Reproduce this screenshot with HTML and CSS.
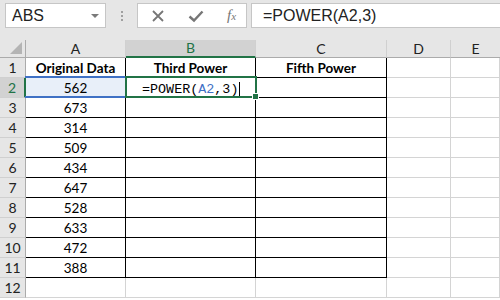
FILE: index.html
```html
<!DOCTYPE html>
<html lang="en">

<head>
    <meta charset="UTF-8">
    <title>POWER formula</title>
    <link rel="stylesheet" href="styles.css">
</head>

<body>

    <!-- Formula bar -->
    <div class="toolbar">
        <div class="name-box">
            <span>ABS</span>
            <span class="caret"></span>
        </div>
        <div class="grip">
            <i></i><i></i><i></i>
        </div>
        <div class="fx-box">
            <svg width="14" height="14" viewBox="0 0 14 14">
                <path d="M2 2 L12 12 M12 2 L2 12" stroke="#767676" stroke-width="1.8" fill="none" />
            </svg>
            <svg width="16" height="14" viewBox="0 0 16 14">
                <path d="M1.5 7.5 L6 11.5 L14.5 2.5" stroke="#767676" stroke-width="2.4" fill="none" />
            </svg>
            <span class="fx"><i>f</i><i class="x">x</i></span>
        </div>
        <div class="formula">=POWER(A2,3)</div>
    </div>

    <!-- Sheet grid -->
    <div class="sheet">
        <div class="hd corner"><span class="tri"></span></div>
        <div class="hd">A</div>
        <div class="hd sel-col">B</div>
        <div class="hd">C</div>
        <div class="hd">D</div>
        <div class="hd last">E</div>

        <div class="rh">1</div>
        <div class="c t bold">Original Data</div>
        <div class="c t bold">Third Power</div>
        <div class="c t bold">Fifth Power</div>
        <div class="c"></div>
        <div class="c"></div>

        <div class="rh sel-row">2</div>
        <div class="c t ref">562
            <span class="ref-box"></span>
        </div>
        <div class="c t active">
            <span class="edit">=POWER(<b>A2</b>,3)</span>
            <span class="active-box"></span>
        </div>
        <div class="c t"></div>
        <div class="c"></div>
        <div class="c"></div>

        <div class="rh">3</div>
        <div class="c t">673</div><div class="c t"></div><div class="c t"></div><div class="c"></div><div class="c"></div>
        <div class="rh">4</div>
        <div class="c t">314</div><div class="c t"></div><div class="c t"></div><div class="c"></div><div class="c"></div>
        <div class="rh">5</div>
        <div class="c t">509</div><div class="c t"></div><div class="c t"></div><div class="c"></div><div class="c"></div>
        <div class="rh">6</div>
        <div class="c t">434</div><div class="c t"></div><div class="c t"></div><div class="c"></div><div class="c"></div>
        <div class="rh">7</div>
        <div class="c t">647</div><div class="c t"></div><div class="c t"></div><div class="c"></div><div class="c"></div>
        <div class="rh">8</div>
        <div class="c t">528</div><div class="c t"></div><div class="c t"></div><div class="c"></div><div class="c"></div>
        <div class="rh">9</div>
        <div class="c t">633</div><div class="c t"></div><div class="c t"></div><div class="c"></div><div class="c"></div>
        <div class="rh">10</div>
        <div class="c t">472</div><div class="c t"></div><div class="c t"></div><div class="c"></div><div class="c"></div>
        <div class="rh">11</div>
        <div class="c t">388</div><div class="c t"></div><div class="c t"></div><div class="c"></div><div class="c"></div>
        <div class="rh">12</div>
        <div class="c"></div><div class="c"></div><div class="c"></div><div class="c"></div><div class="c"></div>
    </div>

</body>

</html>
```

FILE: styles.css
```css
body {
    margin: 0;
    background: #fff;
    font-family: Lato, 'Open Sans', sans-serif;
    overflow: hidden;
}

.toolbar {
    display: flex;
    height: 40px;
    box-sizing: border-box;
    padding: 3px 0 0 5px;
    background: #e6e6e6;
}

.name-box {
    width: 101px;
    height: 25px;
    box-sizing: border-box;
    border: 1px solid #c6c6c6;
    background: #fff;
    display: flex;
    align-items: center;
    justify-content: space-between;
    padding: 0 6px 0 6px;
    font-family: 'Liberation Sans', Arial, sans-serif;
    font-size: 16px;
    color: #222;
}

.caret {
    width: 0;
    height: 0;
    border-left: 4px solid transparent;
    border-right: 4px solid transparent;
    border-top: 4px solid #7a7a7a;
}

.grip {
    width: 31px;
    display: flex;
    flex-direction: column;
    align-items: center;
    justify-content: center;
    gap: 2px;
    height: 25px;
}

.grip i {
    width: 2px;
    height: 2px;
    background: #a0a0a0;
}

.fx-box {
    width: 110px;
    height: 25px;
    box-sizing: border-box;
    border: 1px solid #c6c6c6;
    background: #fff;
    display: flex;
    align-items: center;
    gap: 23px;
    padding-left: 13px;
}

.fx {
    font-family: 'Liberation Serif', serif;
    color: #767676;
    font-size: 15px;
}

.fx .x {
    font-size: 11px;
}

.formula {
    flex: 1;
    margin-left: 4px;
    height: 25px;
    box-sizing: border-box;
    border: 1px solid #c6c6c6;
    border-right: none;
    background: #fff;
    padding-left: 11px;
    font-family: 'Liberation Sans', Arial, sans-serif;
    font-size: 16px;
    line-height: 23px;
    color: #222;
}

.sheet {
    display: grid;
    grid-template-columns: 26px 100px 130px 131px 64px 49px;
    grid-template-rows: 18px repeat(12, 20px);
}

.hd {
    background: #e6e6e6;
    border-right: 1px solid #d0d0d0;
    border-bottom: 1px solid #ababab;
    text-align: center;
    font-size: 14px;
    line-height: 17px;
    color: #222;
}

.hd.last {
    border-right: none;
}

.hd.corner {
    position: relative;
    border-right-color: #ababab;
}

.tri {
    position: absolute;
    right: 3px;
    bottom: 3px;
    width: 0;
    height: 0;
    border-left: 12px solid transparent;
    border-bottom: 12px solid #b4b4b4;
}

.hd.sel-col {
    background: #d2d2d2;
    border-bottom: 2px solid #217346;
    line-height: 16px;
    color: #217346;
}

.rh {
    background: #e6e6e6;
    border-right: 1px solid #ababab;
    border-bottom: 1px solid #d0d0d0;
    text-align: center;
    font-size: 14px;
    line-height: 20px;
    color: #222;
}

.rh.sel-row {
    background: #d2d2d2;
    border-right: 2px solid #217346;
    color: #217346;
}

.c {
    border-right: 1px solid #d4d4d4;
    border-bottom: 1px solid #d4d4d4;
    text-align: center;
    font-size: 13.5px;
    line-height: 20px;
    color: #000;
}

.c.t {
    border-right-color: #000;
    border-bottom-color: #000;
}

.bold {
    font-weight: bold;
}

.ref {
    position: relative;
    background: #e8eff9;
}

.ref-box {
    position: absolute;
    left: -1px;
    top: -2px;
    right: -1px;
    bottom: -1px;
    border-top: 2px solid #3f71c5;
    border-bottom: 2px solid #3f71c5;
}

.active {
    position: relative;
    text-align: left;
}

.edit {
    font-family: 'Liberation Mono', monospace;
    font-size: 13.4px;
    padding-left: 16px;
    border-right: 1px solid #000;
    padding-right: 1px;
}

.edit b {
    font-weight: normal;
    color: #3f71c5;
}

.active-box {
    position: absolute;
    left: -1px;
    top: -2px;
    right: -2px;
    bottom: -1px;
    border: 2px solid #217346;
}

.active-box::after {
    content: "";
    position: absolute;
    right: -4px;
    bottom: -4px;
    width: 5px;
    height: 5px;
    background: #217346;
    border: 1px solid #fff;
}
```
